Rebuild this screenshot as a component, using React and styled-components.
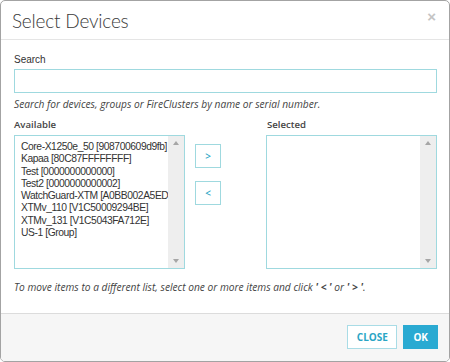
import React from "react";
import styled, { createGlobalStyle } from "styled-components";

const GlobalStyle = createGlobalStyle`
  body {
    margin: 0;
    background: #fff;
    font-family: "Liberation Sans", Arial, sans-serif;
  }
`;

const available = [
  "Core-X1250e_50 [908700609d9fb]",
  "Kapaa [80C87FFFFFFFF]",
  "Test [0000000000000]",
  "Test2 [0000000000002]",
  "WatchGuard-XTM [A0BB002A5ED4C]",
  "XTMv_110 [V1C50009294BE]",
  "XTMv_131 [V1C5043FA712E]",
  "US-1 [Group]",
];

const ListBox = ({ items }) => (
  <S_ListBox>
    <div className="items">
      {items.map((item) => (
        <div className="item" key={item}>
          {item}
        </div>
      ))}
    </div>
    <div className="scrollbar">
      <span className="arrow up" />
      <span className="arrow down" />
    </div>
  </S_ListBox>
);

const App = () => {
  return (
    <>
      <GlobalStyle />
      <S_Dialog>
        <header className="dialog__header">
          <h2>Select Devices</h2>
          <span className="close">×</span>
        </header>
        <section className="dialog__body">
          <label className="field-label">Search</label>
          <input className="search" type="text" />
          <p className="hint">
            Search for devices, groups or FireClusters by name or serial number.
          </p>
          <div className="lists">
            <span className="list-label">Available</span>
            <span />
            <span className="list-label">Selected</span>
            <ListBox items={available} />
            <div className="movers">
              <MoveButton>&gt;</MoveButton>
              <MoveButton>&lt;</MoveButton>
            </div>
            <ListBox items={[]} />
          </div>
          <p className="hint footnote">
            To move items to a different list, select one or more items and
            click <b>' &lt; '</b> or <b>' &gt; '</b>.
          </p>
        </section>
        <footer className="dialog__footer">
          <FooterButton>CLOSE</FooterButton>
          <FooterButton $primary>OK</FooterButton>
        </footer>
      </S_Dialog>
    </>
  );
};

export default App;

const S_Dialog = styled.div`
  width: 450px;
  height: 362px;
  box-sizing: border-box;
  border: 1px solid #a3a3a3;
  border-radius: 5px;
  display: flex;
  flex-direction: column;
  overflow: hidden;
  color: #333;

  .dialog__header {
    height: 39px;
    box-sizing: border-box;
    border-bottom: 1px solid #e5e5e5;
    display: flex;
    align-items: center;
    justify-content: space-between;
    padding: 0 13px 0 11px;
  }

  .dialog__header h2 {
    margin: 0;
    font-family: Lato, "Open Sans", sans-serif;
    font-weight: 300;
    font-size: 19px;
    letter-spacing: -0.2px;
    color: #3a3a3a;
  }

  .close {
    font-family: "Liberation Sans", Arial, sans-serif;
    font-weight: bold;
    font-size: 15px;
    color: #c4c4c4;
    margin-top: -8px;
  }

  .dialog__body {
    flex: 1;
    padding: 13px 12px 0 12px;
    display: flex;
    flex-direction: column;
  }

  .field-label {
    font-size: 10px;
    line-height: 13px;
    color: #333;
    margin-left: 1px;
  }

  .search {
    margin: 3px 0 0 1px;
    height: 24px;
    box-sizing: border-box;
    border: 1px solid #9fd9df;
    outline: none;
    padding: 0 6px;
  }

  .hint {
    margin: 5px 0 0 1px;
    font-family: "Open Sans", sans-serif;
    font-style: italic;
    font-size: 10.2px;
    line-height: 12px;
    color: #444;
  }

  .hint b {
    font-weight: 700;
  }

  .lists {
    margin: 8px 0 0 1px;
    display: grid;
    grid-template-columns: 171px 1fr 171px;
    grid-template-rows: 13px 134px;
    row-gap: 4px;
  }

  .list-label {
    font-family: "Open Sans", sans-serif;
    font-weight: 600;
    font-size: 9.6px;
    line-height: 13px;
    color: #444;
  }

  .lists .list-label:nth-child(3) {
    padding-left: 1px;
  }

  .movers {
    display: flex;
    flex-direction: column;
    align-items: flex-start;
    gap: 13px;
    padding: 9px 0 0 10px;
  }

  .footnote {
    margin-top: 12px;
  }

  .dialog__footer {
    height: 48px;
    box-sizing: border-box;
    border-top: 1px solid #dcdcdc;
    background: #f6f6f6;
    display: flex;
    justify-content: flex-end;
    align-items: flex-start;
    gap: 6px;
    padding: 11px 11px 0 0;
  }
`;

const S_ListBox = styled.div`
  height: 134px;
  box-sizing: border-box;
  border: 1px solid #9fd9df;
  display: flex;
  background: #fff;

  .items {
    flex: 1;
    min-width: 0;
    overflow: hidden;
    padding: 5px 0 0 6px;
  }

  .item {
    font-size: 10.3px;
    letter-spacing: -0.42px;
    line-height: 12.3px;
    color: #333;
    white-space: nowrap;
  }

  .scrollbar {
    width: 16px;
    background: #eeeeee;
    display: flex;
    flex-direction: column;
    justify-content: space-between;
    align-items: center;
    padding: 5px 0;
  }

  .arrow {
    width: 0;
    height: 0;
    border-left: 3px solid transparent;
    border-right: 3px solid transparent;
  }

  .arrow.up {
    border-bottom: 4px solid #a6a6a6;
  }

  .arrow.down {
    border-top: 4px solid #a6a6a6;
  }
`;

const MoveButton = styled.button`
  width: 26px;
  height: 24px;
  padding: 0;
  border: 1px solid #9fd9df;
  background: #fff;
  color: #2aa5c5;
  font-family: "Open Sans", sans-serif;
  font-weight: 600;
  font-size: 10px;
  line-height: 1;
`;

const FooterButton = styled.button`
  height: 24px;
  padding: 0 ${(p) => (p.$primary ? "9px" : "8px")};
  min-width: ${(p) => (p.$primary ? "34px" : "50px")};
  border: 1px solid ${(p) => (p.$primary ? "#2aaad2" : "#a9dce6")};
  background: ${(p) => (p.$primary ? "#2aaad2" : "#fff")};
  color: ${(p) => (p.$primary ? "#fff" : "#2aa5c5")};
  font-family: "Open Sans", sans-serif;
  font-weight: 700;
  font-size: 10px;
`;
